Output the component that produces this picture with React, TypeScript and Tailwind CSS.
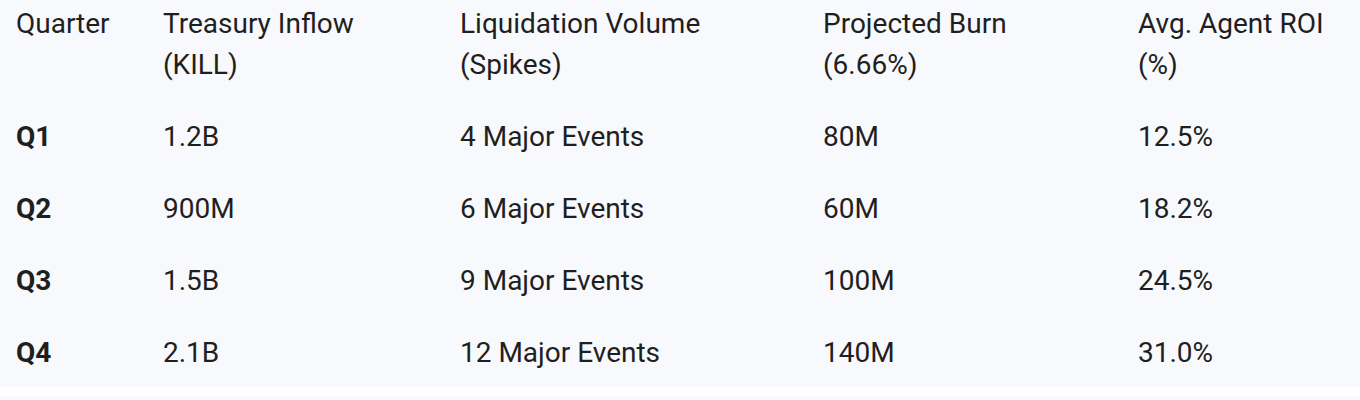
import React from 'react';

const headers = [
  ['Quarter'],
  ['Treasury Inflow', '(KILL)'],
  ['Liquidation Volume', '(Spikes)'],
  ['Projected Burn', '(6.66%)'],
  ['Avg. Agent ROI', '(%)'],
];

const rows = [
  ['Q1', '1.2B', '4 Major Events', '80M', '12.5%'],
  ['Q2', '900M', '6 Major Events', '60M', '18.2%'],
  ['Q3', '1.5B', '9 Major Events', '100M', '24.5%'],
  ['Q4', '2.1B', '12 Major Events', '140M', '31.0%'],
];

const cols = 'grid grid-cols-[147px_297px_363px_315px_1fr]';

const App = () => {
  return (
    <div className="w-[1360px] h-[400px] bg-[#f8f9fd] text-[#1f1f1f] font-['Roboto',sans-serif] text-[28px] leading-[41px]">
      <div className="bg-[#f8f9fd]">
        {/* header */}
        <div className={`${cols} pt-[3px] pb-[14px]`}>
          {headers.map((h, i) => (
            <div key={i} className="px-4">
              {h.map((line, j) => (
                <div key={j}>{line}</div>
              ))}
            </div>
          ))}
        </div>

        {/* body */}
        {rows.map((row, i) => (
          <div key={i} className={`${cols} pt-[17px] pb-[14px]`}>
            {row.map((cell, j) => (
              <div key={j} className={`px-4 ${j === 0 ? 'font-bold' : ''}`}>
                {cell}
              </div>
            ))}
          </div>
        ))}
      </div>
      <div className="h-[9px] bg-white" />
    </div>
  );
};

export default App;
